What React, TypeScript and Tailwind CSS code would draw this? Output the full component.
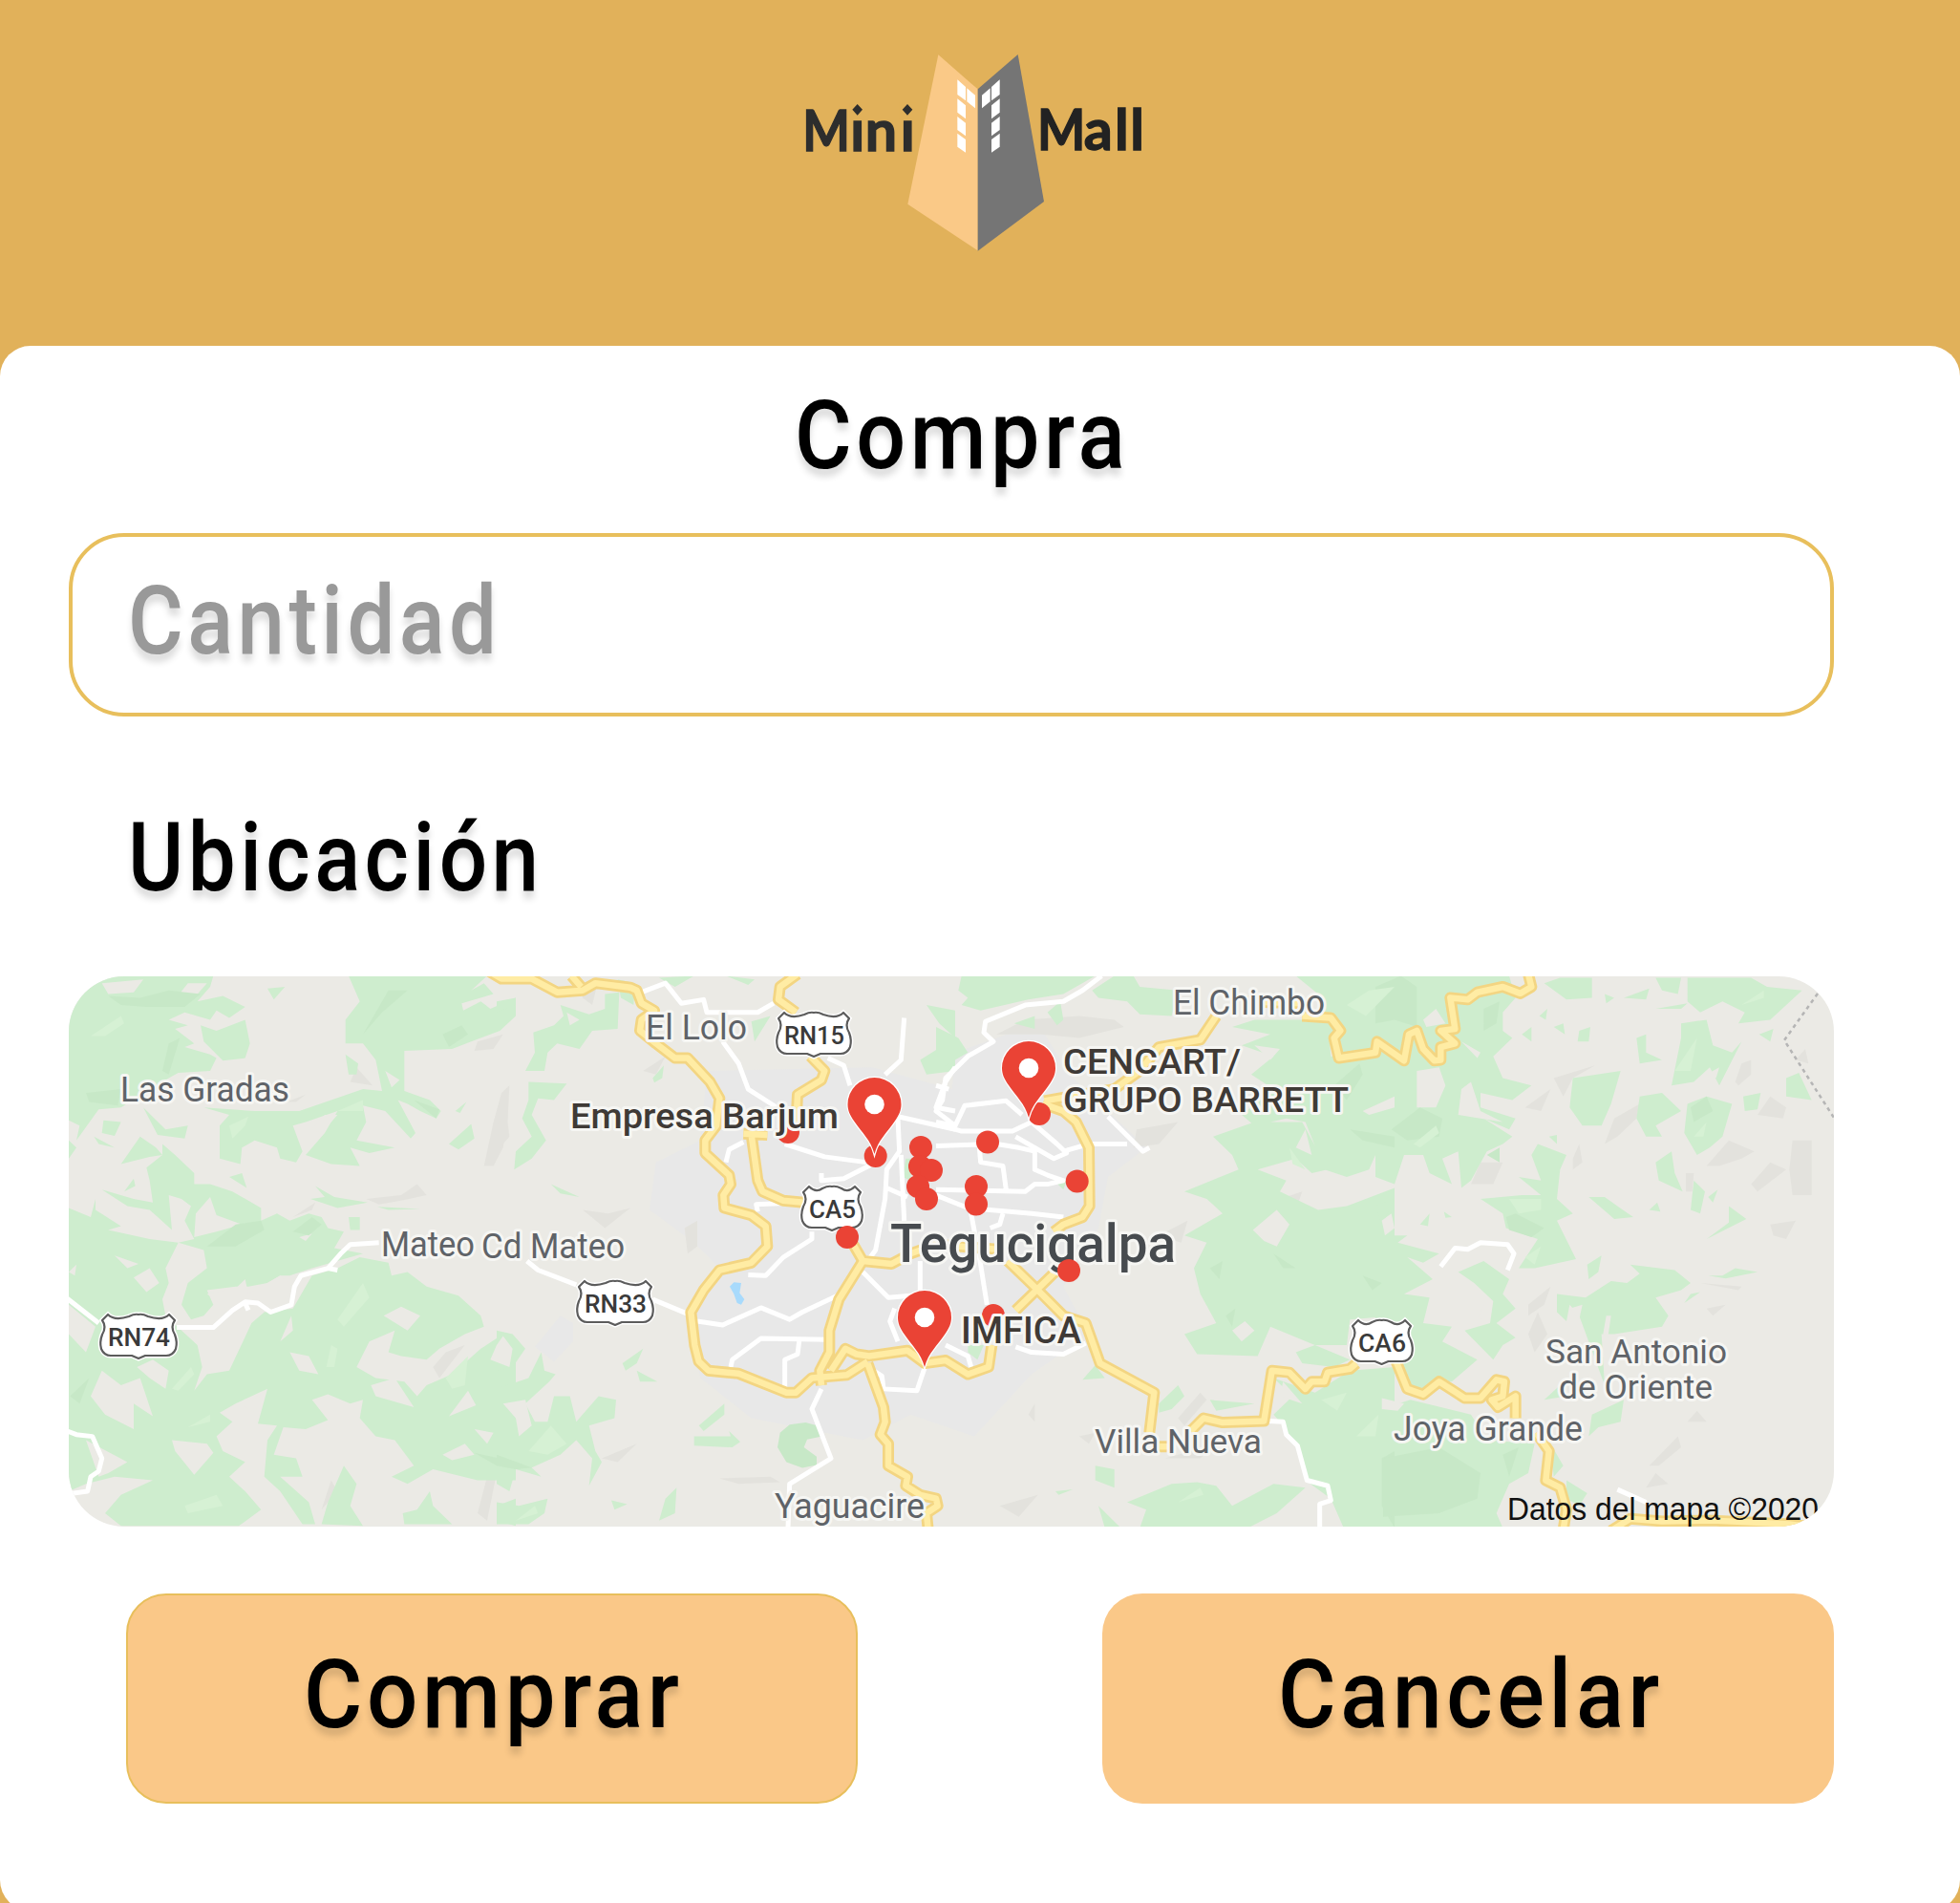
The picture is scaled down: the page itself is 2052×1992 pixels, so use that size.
import React from "react";

type Tile = 0 | 1 | 2 | 3;

const TILE_TRANSFORM: Record<Tile, string> = {
  0: "translate(-12 -12) scale(0.33333 0.38265)",
  1: "translate(448 -12) scale(0.33333 0.38265)",
  2: "translate(908 -12) scale(0.33333 0.38265)",
  3: "translate(1368 -12) scale(0.33333 0.38265)",
};

const FOREST: Record<Tile, string[]> = {
  0: [
    "M36,30 490,30 480,60 440,100 520,85 590,115 540,145 500,125 480,150 400,130 350,150 410,165 370,175 430,215 400,225 480,245 500,255 480,290 380,295 350,310 200,390 130,395 60,480 70,440 36,425Z",
    "M450,165 500,180 590,150 605,215 590,255 520,262 460,210Z",
    "M36,480 60,500 36,530Z",
    "M660,65 715,60 680,95Z",
    "M915,30 1350,30 1300,70 1340,50 1370,80 1270,105 1275,125 1330,100 1360,120 1440,90 1440,140 1390,180 1300,210 1240,230 1090,235 1090,345 1170,370 1205,400 1190,420 1140,400 1100,380 1070,370 1125,460 1110,475 1030,400 960,385 970,430 940,480 1060,500 980,515 920,500 950,550 860,545 780,520 840,460 880,400 780,430 740,440 770,510 750,540 700,530 690,500 620,480 580,500 575,545 510,530 510,440 540,410 460,390 620,400 760,400 860,370 960,340 1020,345 1000,260 960,215 905,215 905,150 950,100Z",
    "M905,245 945,270 940,300 915,300Z",
    "M145,425 200,430 180,468 140,460Z",
    "M115,470 180,500 130,490Z",
    "M270,390 340,450 410,440 400,475 315,465Z",
    "M200,545 260,470 310,500 330,520 290,525Z",
    "M280,555 330,520 330,490 370,520 430,570 430,600 480,600 550,620 640,665 640,700 690,680 730,700 790,680 830,690 850,720 900,730 870,775 960,790 800,830 730,850 700,850 660,870 600,880 560,880 470,890 490,930 460,960 420,970 390,930 410,870 470,830 460,780 380,760 430,750 400,700 420,660 390,640 350,630 360,725 290,670 220,660 140,615 240,640 300,650 290,590Z",
    "M210,620 240,585 245,605Z",
    "M540,580 580,570 595,610Z",
    "M810,605 870,635 975,650 880,665 795,640 840,635Z",
    "M1005,662 1140,668 1040,670Z",
    "M915,690 950,690 950,725 920,725Z",
    "M1230,490 1300,435 1310,475 1260,505Z",
    "M1250,400 1285,375 1265,405Z",
    "M105,690 120,640 120,670 200,715 160,725 290,750 380,760 340,830 350,870 330,915 340,960 440,1040 455,1100 430,1165 470,1120 540,1110 610,980 650,950 740,940 800,850 880,830 950,800 1040,815 1050,850 1100,840 1160,880 1260,905 1330,960 1340,990 1280,1010 1200,1050 1160,1080 1080,1070 1040,1060 1060,1000 980,1030 940,1100 1000,1130 1090,1140 1130,1180 1160,1150 1240,1120 1330,1050 1400,1010 1440,1040 1440,1410 1320,1410 1180,1380 1100,1420 1050,1400 1120,1370 1060,1300 1000,1290 950,1240 960,1190 920,1200 850,1175 800,1190 850,1245 780,1270 710,1265 680,1340 750,1350 770,1400 700,1400 790,1470 810,1530 770,1530 700,1440 650,1400 660,1300 690,1260 630,1255 660,1160 560,1200 510,1225 550,1250 500,1290 520,1330 590,1360 540,1400 590,1440 640,1490 570,1535 200,1535 150,1500 200,1450 300,1410 180,1400 90,1420 36,1440 36,665Z",
    "M830,1530 850,1470 900,1370 940,1420 920,1480 960,1535Z",
    "M1085,1500 1130,1490 1170,1440 1180,1480 1240,1530 1090,1530Z",
    "M1380,1480 1440,1460 1440,1535 1380,1520Z",
  ],
  1: [
    "M200,110 290,135 340,120 340,80 385,75 380,175 300,180 260,230 190,215 160,240 150,290 90,290 120,240 115,185 180,165 210,140Z",
    "M100,320 220,325 180,370 130,365 110,410 155,480 110,530 55,560 60,510 110,470 80,420 100,370Z",
    "M0,100 60,90 60,110 0,130Z",
    "M490,310 525,275 520,310 495,322Z",
    "M380,40 435,50 430,110 390,90Z",
    "M0,1000 50,1010 90,1050 50,1100 0,1110Z",
    "M0,1160 100,1130 140,1060 150,1110 185,1120 165,1140 90,1200 120,1250 160,1250 180,1180 230,1180 250,1250 320,1180 375,1190 370,1240 290,1260 310,1330 330,1360 290,1425 300,1350 250,1300 200,1340 110,1375 140,1400 60,1380 40,1440 0,1420Z",
    "M395,1090 460,1050 440,1090 405,1110Z",
    "M440,1110 505,1140 450,1140Z",
    "M635,1260 715,1200 715,1230 650,1275Z",
    "M620,1290 735,1290 730,1275 765,1305 740,1320 620,1315Z",
    "M0,1470 70,1480 160,1460 150,1500 100,1530 0,1530Z",
    "M510,1520 530,1460 565,1430 560,1500Z",
    "M360,1465 410,1475 370,1490Z",
    "M510,35 620,30 560,60Z",
    "M720,30 810,40 790,55Z",
    "M800,155 860,140 810,210Z",
    "M1350,110 1440,125 1440,290 1350,300 1330,260 1440,200 1390,160Z",
    "M170,600 260,635 200,625Z",
    "M1285,530 1305,530 1300,590 1275,580Z",
  ],
  2: [
    "M80,30 500,30 400,80 290,95 140,125 80,110 100,90 70,70Z",
    "M490,70 560,30 620,30 640,60 760,70 740,140 640,135 600,100 510,90Z",
    "M390,100 400,150 380,165 350,130Z",
    "M245,160 310,140 310,175Z",
    "M0,170 70,200 100,240 20,280 0,280Z",
    "M1130,30 1440,30 1440,250 1390,240 1260,265 1230,200 1150,145 1220,130 1200,80Z",
    "M930,170 1000,150 1230,150 1240,250 1440,250 1440,560 1380,520 1360,560 1290,580 1220,560 1160,430 1100,420 1000,440 960,410 1060,340 990,300 1060,250 960,220 1050,190Z",
    "M870,470 1000,430 1150,430 1230,560 1180,570 1130,530 1010,560 1100,590 1080,620 1200,670 1290,660 1440,610 1440,960 1300,970 1290,1040 1190,1040 1050,990 1010,1070 820,1065 780,1010 880,980 830,900 810,830 850,760 780,740 900,680 850,640 780,620 950,560 930,520Z",
    "M1130,1060 1190,1040 1300,1080 1250,1100 1150,1090Z",
    "M1060,1130 1190,1170 1300,1110 1440,1100 1440,1540 1280,1540 1240,1460 1160,1410 1130,1310 1080,1250 1060,1230 1120,1180Z",
    "M460,1135 500,1095 530,1130Z",
    "M700,1200 760,1150 780,1180 740,1215 700,1225Z",
    "M860,1190 1000,1200 880,1220Z",
    "M600,1470 740,1420 820,1415 880,1425 930,1480 1060,1420 1160,1430 1070,1500 980,1540 640,1540 660,1490Z",
    "M500,1370 560,1380 560,1430 500,1410Z",
    "M375,1440 430,1435 385,1450Z",
    "M510,1480 580,1540 530,1540Z",
    "M100,1040 150,1040 130,1080 100,1060Z",
    "M370,590 410,590 400,615Z",
  ],
  3: [
    "M0,30 420,30 440,90 400,130 400,180 430,200 370,250 400,310 490,330 430,370 330,350 330,390 440,420 420,450 340,420 430,470 400,490 350,510 300,590 270,610 260,510 210,530 240,600 170,570 150,520 90,520 60,600 0,580Z",
    "M0,660 60,640 20,710Z",
    "M0,740 100,740 70,760 200,790 150,815 100,800 180,860 90,900 170,910 150,980 240,990 210,1030 320,1080 240,1140 200,1140 150,1160 100,1150 60,1090 0,1090Z",
    "M0,1220 110,1190 300,1230 350,1300 500,1310 480,1390 420,1420 380,1500 400,1540 0,1540Z",
    "M510,490 600,520 580,560 570,640 620,680 570,700 630,805 500,830 450,830 510,750 410,720 400,680 330,640 460,630 520,630 450,580 520,590 490,520Z",
    "M545,470 570,465 570,490Z",
    "M530,50 580,35 680,35 680,90 600,95Z",
    "M260,840 340,810 420,860 400,900 440,940 380,980 440,1020 400,1040 370,1080 280,1000 360,980 370,920 310,870Z",
    "M570,900 660,910 740,865 790,870 830,845 800,820 940,835 990,870 960,890 880,910 920,960 900,990 750,1010 710,1010 720,1150 640,960 610,930 600,975 570,950Z",
    "M970,925 1020,895 990,900Z",
    "M620,310 770,290 740,380 710,440 650,440 610,390Z",
    "M820,200 850,190 850,240 900,260 830,270Z",
    "M830,360 900,350 960,400 880,440 900,470 850,470 820,420Z",
    "M930,330 960,200 960,160 1040,150 1060,220 1120,240 1150,210 1080,330 1050,280 1000,320Z",
    "M980,380 1040,360 1120,380 1090,470 1050,500 1010,520 970,460Z",
    "M980,35 1180,35 1230,60 1340,70 1240,150 1140,160 1160,130 1090,100 1020,130 980,100Z",
    "M780,90 860,65 850,95Z",
    "M880,35 960,35 950,80 900,70Z",
    "M720,80 750,90 725,105Z",
    "M880,120 980,105 960,120Z",
    "M460,190 490,170 490,210Z",
    "M515,140 540,120 535,150Z",
    "M560,170 590,160 595,190Z",
    "M640,180 675,170 670,210 635,210Z",
    "M1205,190 1250,175 1240,210Z",
    "M1155,360 1210,350 1200,395 1160,400Z",
    "M1290,310 1330,295 1370,370 1290,360Z",
    "M880,540 930,510 940,570 965,620 890,590Z",
    "M670,635 720,635 760,660 810,690 750,695Z",
    "M1000,590 1035,620 1020,680 990,670Z",
    "M860,670 885,650 895,675Z",
    "M1045,635 1075,615 1060,650Z",
    "M1110,660 1165,695 1040,750 1110,705Z",
    "M1045,850 1090,850 1130,830 1200,840 1100,858Z",
    "M670,860 665,820 710,795 700,840Z",
    "M680,1230 780,1190 770,1250 700,1265 670,1290Z",
    "M530,1190 580,1150 600,1180Z",
    "M550,1310 590,1370 560,1400Z",
    "M600,1410 665,1445 640,1480 600,1460Z",
    "M215,675 240,690 220,692Z",
    "M140,710 170,680 165,715Z",
  ],
};

const CLEARINGS: Record<Tile, string[]> = {
  0: [
    "M370,95 410,50 470,50 420,100Z",
    "M140,50 270,40 240,75 160,80Z",
    "M105,1180 140,1110 200,1150 260,1130 300,1235 240,1200 240,1270 150,1230Z",
    "M240,855 290,830 320,870 280,895Z",
    "M180,795 255,818 220,830Z",
    "M36,840 60,820 55,850Z",
    "M36,930 120,990 90,1060 36,1010Z",
    "M360,1300 470,1310 490,1335 430,1395 370,1330Z",
    "M430,745 435,680 480,635 500,685 580,710 500,730Z",
    "M560,885 590,860 600,900 640,880 700,850 740,880 720,910 660,930 550,950 470,900Z",
    "M1025,960 1080,935 1140,960 1100,1000Z",
    "M1230,1235 1290,1165 1315,1205Z",
    "M985,1150 1060,1130 1120,1210 1000,1180Z",
    "M1380,1040 1400,1015 1430,1050 1420,1100 1360,1080Z",
    "M1210,1340 1280,1310 1310,1340 1240,1355Z",
    "M1310,1270 1370,1280 1350,1310Z",
    "M90,1300 220,1360 160,1390 130,1400Z",
    "M760,745 800,735 780,755Z",
    "M800,450 840,410 880,410 830,460Z",
    "M1030,290 1075,315 1050,335Z",
    "M730,1060 790,1070 820,1120 760,1110Z",
    "M700,1030 735,960 740,1000Z",
    "M590,1210 640,1170 620,1225Z",
    "M250,1100 300,1080 350,1110 340,1160 290,1130Z",
  ],
  1: ["M20,1200 90,1190 110,1260 70,1290 60,1240Z", "M220,130 260,150 230,165Z"],
  2: [
    "M995,725 1070,670 1110,710 1070,770 1030,755Z",
    "M930,1000 970,975 1000,1000 960,1030Z",
    "M1160,450 1180,520 1130,500Z",
    "M1340,400 1440,360 1440,390 1360,410Z",
    "M1090,1140 1150,1200 1080,1180Z",
    "M1000,220 1080,230 1050,260Z",
  ],
  3: [
    "M130,290 200,280 220,330 190,390 130,390Z",
    "M150,150 190,120 220,160 160,170Z",
    "M270,340 300,320 330,400 400,430 260,410Z",
    "M270,210 330,240 320,255Z",
    "M20,700 50,680 60,720 30,740Z",
    "M610,940 650,930 640,970Z",
    "M725,960 740,960 730,1020 715,1010Z",
    "M1040,300 1080,280 1070,310Z",
    "M340,930 360,960 320,970Z",
    "M20,1185 90,1200 70,1220 20,1215Z",
  ],
};

const DARK_FOREST: Record<Tile, string[]> = {
  0: [
    "M160,85 260,90 350,70 450,80 400,115 280,115 200,110Z",
    "M350,215 385,200 350,300 330,290Z",
    "M90,350 200,340 190,385 100,375Z",
    "M960,190 1040,70 1100,70 1020,130Z",
    "M1210,190 1270,165 1290,190 1230,225Z",
    "M470,770 560,710 640,700 650,725 560,770Z",
    "M740,730 800,690 830,710 790,740Z",
    "M40,1180 100,1130 70,1200Z",
    "M1310,1335 1440,1360 1380,1370Z",
    "M1120,370 1200,395 1190,420Z",
  ],
  1: [
    "M0,1340 110,1375 60,1380 0,1370Z",
    "M890,1280 920,1258 970,1252 1015,1262 1022,1290 975,1298 965,1320 1005,1345 1005,1368 960,1376 910,1360 882,1320Z",
  ],
  2: [
    "M1250,330 1330,270 1340,300 1290,370Z",
    "M1300,450 1440,470 1440,500 1340,480Z",
    "M860,830 900,810 890,860Z",
    "M910,960 940,940 930,990Z",
    "M1400,1350 1440,1330 1440,1540 1400,1480Z",
    "M1060,790 1130,830 1090,830Z",
    "M1340,850 1400,870 1370,890Z",
  ],
  3: [
    "M0,60 80,30 130,60 130,170 60,150 0,160Z",
    "M50,450 140,390 210,420 200,470 100,480Z",
    "M410,690 440,680 530,720 490,745 420,725Z",
    "M24,1350 200,1320 330,1390 320,1460 200,1500 24,1510Z",
    "M340,120 390,100 380,160 340,180Z",
    "M990,390 1040,360 1060,400 1000,430Z",
    "M400,1340 450,1320 420,1400Z",
    "M350,520 390,500 390,540Z",
  ],
};

const LIGHT_FOREST: Record<Tile, string[]> = {
  0: [
    "M105,195 200,140 210,160 150,195Z",
    "M540,440 600,415 590,440 550,475Z",
    "M880,400 960,370 960,400Z",
    "M880,970 960,870 980,910 900,990Z",
    "M360,1160 420,1100 430,1120 380,1165Z",
    "M1220,1130 1290,1070 1280,1150 1240,1160Z",
    "M400,1480 500,1450 520,1480 410,1500Z",
    "M845,1100 860,1040 880,1050 870,1100Z",
    "M410,1265 480,1230 480,1250Z",
  ],
  1: ["M100,1330 170,1260 220,1310 160,1340Z", "M60,1520 120,1480 130,1500Z"],
  2: [
    "M1290,110 1360,70 1440,60 1350,140Z",
    "M1110,500 1160,560 1120,545Z",
    "M1320,1290 1390,1230 1380,1290Z",
    "M1210,1190 1290,1170 1260,1220Z",
    "M760,1470 830,1430 840,1450Z",
  ],
  3: [
    "M120,490 190,440 200,460 140,500Z",
    "M940,290 1010,200 990,290Z",
    "M470,800 520,770 500,820Z",
    "M1150,110 1220,70 1220,90Z",
    "M420,640 520,640 520,670 450,680Z",
    "M1000,470 1040,430 1030,470Z",
  ],
};

const RELIEF: Record<Tile, string[]> = {
  0: [
    "M1370,430 1395,350 1420,330 1415,420 1400,500 1370,550 1340,550Z",
    "M970,640 1080,630 1130,600 1160,630 1080,645 1010,655Z",
    "M1320,210 1400,190 1370,230 1310,235Z",
    "M290,1120 350,1100 350,1155Z",
    "M740,690 810,650 800,670Z",
    "M940,280 990,330 920,320Z",
    "M720,375 780,355 750,375Z",
    "M1180,1100 1220,1060 1280,1040 1200,1130Z",
    "M860,1410 880,1440 830,1490Z",
    "M1320,1500 1350,1400 1380,1390 1350,1520Z",
  ],
  1: [
    "M0,440 30,400 40,470 10,500Z",
    "M260,50 320,40 300,110 270,90Z",
    "M270,670 350,680 420,665 340,720Z",
    "M70,1250 110,1230 100,1290 70,1290Z",
    "M460,290 530,250 500,300Z",
    "M700,1405 860,1400 890,1415 760,1420Z",
    "M590,720 630,700 630,770 600,790Z",
    "M330,1350 440,1310 380,1360Z",
  ],
  2: [
    "M190,190 280,150 450,140 560,150 590,170 450,200 330,190Z",
    "M630,450 760,430 700,490 620,500Z",
    "M760,1240 830,1170 850,1190 780,1260Z",
    "M700,740 790,700 770,760Z",
    "M720,1350 880,1310 830,1350Z",
    "M200,1480 320,1450 260,1510Z",
    "M290,1230 310,1200 310,1250Z",
    "M1080,640 1150,620 1130,670Z",
    "M450,1290 500,1280 480,1310Z",
  ],
  3: [
    "M720,490 750,420 830,380 820,420 760,470Z",
    "M470,390 550,340 520,400Z",
    "M560,310 690,275 620,310 590,360Z",
    "M300,600 330,540 400,540 370,600Z",
    "M1130,320 1150,270 1180,260 1180,300 1140,330Z",
    "M1040,550 1110,480 1190,510 1150,530 1080,550Z",
    "M1300,560 1310,480 1370,480 1370,630 1310,630Z",
    "M1180,600 1240,540 1290,560 1200,620Z",
    "M1240,710 1320,700 1290,750 1250,740Z",
    "M480,930 550,880 530,930 480,960Z",
    "M1040,940 1100,930 1060,960Z",
    "M1020,870 1150,880 1140,890Z",
    "M850,1430 880,1390 920,1420Z",
    "M980,1250 1010,1220 1040,1250Z",
    "M1200,410 1240,360 1290,390 1280,420Z",
    "M860,1370 950,1290 960,1320 890,1370Z",
    "M620,530 640,490 650,540 620,560Z",
    "M1320,260 1350,230 1360,270Z",
    "M975,570 1000,570 995,620 975,620Z",
    "M540,1010 500,1060 480,1010 510,950Z",
  ],
};

const HIGHWAYS: Record<Tile, string> = {
  0: "",
  1: "M-35,12 L15,38 110,38 190,75 270,70 310,50 420,62 440,70 455,105 495,125 455,150 450,180 500,215 560,255 600,255 670,320 700,365 690,440 655,480 655,515 730,575 735,600 712,630 715,665 800,685 845,715 850,770 800,815 700,835 650,890 610,950 622,1040 635,1085 665,1110 760,1118 910,1170 940,1170 990,1130 1100,1122 1165,1085 M235,30 L265,60 M945,25 L890,60 885,95 940,130 M985,250 L1030,290 1020,315 945,355 940,440 M775,462 L850,465 M800,465 L820,590 835,620 900,645 965,650 M1120,765 L1150,810 1240,818 1300,790 1380,765 1600,780 M1150,810 L1075,915 1045,1000 1045,1060 1015,1110 1020,1150 M1050,1110 L1095,1050 1130,1065 1170,1070 1290,1055 1345,1090 1410,1082 1480,1120 1545,1100 1555,1040 M1165,1090 L1215,1210 1220,1250 1205,1285 1230,1310 1230,1370 1290,1400 1285,1425 1330,1450 1380,1460 1385,1480 1350,1500 1355,1545",
  2: "M335,380 L400,400 440,430 480,500 482,660 460,690 400,710 370,730 M340,372 L420,360 560,340 640,290 700,225 830,205 880,140 M960,100 L1150,105 M1150,140 L1240,145 1270,180 1250,200 1265,255 1380,240 1385,210 1470,262 1485,190 1510,180 1530,230 1565,262 1585,260 1585,225 1630,215 1585,180 1630,175 1615,90 1670,95 1700,75 1780,60 1835,78 1870,60 1860,25 M250,945 L380,835 M225,810 L320,890 400,960 470,980 515,1090 685,1170 670,1280 M700,1318 L730,1318 M800,1275 L840,1240 900,1252 1030,1248 1055,1110 1110,1115 1160,1160 1180,1140 1220,1140 1230,1115 1300,1105 1320,1090",
  3: "M65,1085 L100,1160 150,1175 200,1140 280,1185 330,1185 380,1135 405,1140 400,1180 365,1190 385,1210 440,1180 440,1240 M505,1280 L545,1330 535,1410 580,1430 600,1490 590,1545 M740,1548 L800,1515 900,1522 1060,1520 1300,1530 1440,1545",
};

const STREETS: Record<Tile, string> = {
  0: "M30,912 L130,980 M375,992 L490,992 550,945 590,922 630,925 670,950 735,930 745,880 765,850 850,830 880,835 M850,830 L890,790 920,765 1010,760 M30,1275 L60,1285 110,1290 140,1350 130,1385 105,1400 95,1440 30,1448 M590,925 L600,945",
  1: "M455,75 L530,50 580,105 650,95 660,130 820,130 870,105 M710,210 L760,270 790,340 880,390 M1040,255 L1090,275 1110,330 M1280,145 L1270,260 1220,300 M905,490 L1030,525 1160,540 M1180,545 L1090,585 1020,590 1020,570 M1260,415 L1440,450 M1260,420 L1265,510 1225,560 1220,640 1190,780 1165,810 M1270,520 L1280,700 M1225,610 L1290,635 M720,540 L730,505 775,485 M955,650 L815,655 820,675 M990,730 L990,750 900,800 845,850 790,848 M630,975 L710,985 830,938 920,970 960,950 1070,905 M1150,840 L1230,910 1300,905 M1250,940 L1235,975 1260,1030 M735,1100 L740,1080 830,1022 1040,1025 M950,1030 L945,1065 905,1080 905,1160 M1020,1160 L990,1215 1050,1350 920,1420 915,1540 M95,810 L130,835 250,875 M490,915 L600,955 M1165,1100 L1210,1125 1215,1160 1320,1165 1345,1100 M1330,810 L1330,890 M1440,280 L1410,320 1380,390 1440,400",
  2: "M520,30 L460,70 400,100 280,110 155,155 150,185 180,210 100,250 30,310 20,370 0,400 60,440 0,430 M0,330 L40,340 M60,440 L90,385 220,372 270,410 M0,435 L80,455 240,455 300,430 380,490 410,515 370,530 250,470 M0,495 L190,490 M190,490 L260,500 310,510 310,560 350,575 400,590 350,600 310,600 280,620 0,615 M400,510 L480,490 600,490 M540,415 L650,510 670,500 M135,490 L140,540 210,550 220,615 M0,630 L100,665 300,680 400,690 M110,680 L140,820 160,930 M210,680 L200,710 170,720 M30,1040 L100,1070 110,1100 M250,1045 L300,1060 400,1065 470,1035 M1045,1248 L1090,1250 1100,1285 1135,1315 1165,1410 1230,1425 1240,1465 1205,1475 1205,1540",
  3: "M205,825 L250,775 290,778 330,760 415,765 435,790 415,835 M760,1435 L850,1470",
};

const TILES: Tile[] = [0, 1, 2, 3];

interface Label {
  text: string;
  x: number;
  y: number;
  w: number;
  size: number;
  weight?: number;
  fill: string;
}

const TOWN = "#5f6368";
const PLACE = "#3f3a36";

const LABELS: Label[] = [
  { text: "Las Gradas", x: 54, y: 131, w: 177, size: 36, fill: TOWN },
  { text: "Mateo", x: 327, y: 293, w: 98, size: 36, fill: TOWN },
  { text: "Cd Mateo", x: 432, y: 295, w: 150, size: 36, fill: TOWN },
  { text: "El Lolo", x: 604, y: 66, w: 106, size: 36, fill: TOWN },
  { text: "Empresa Barjum", x: 525, y: 159, w: 281, size: 36, weight: 500, fill: PLACE },
  { text: "El Chimbo", x: 1156, y: 40, w: 159, size: 36, fill: TOWN },
  { text: "CENCART/", x: 1041, y: 102, w: 186, size: 37, weight: 500, fill: PLACE },
  { text: "GRUPO BARRETT", x: 1041, y: 142, w: 299, size: 37, weight: 500, fill: PLACE },
  { text: "Tegucigalpa", x: 860, y: 299, w: 299, size: 55, weight: 500, fill: "#474b4f" },
  { text: "IMFICA", x: 934, y: 384, w: 126, size: 38, weight: 500, fill: PLACE },
  { text: "Villa Nueva", x: 1074, y: 499, w: 175, size: 35, fill: TOWN },
  { text: "Yaguacire", x: 739, y: 567, w: 157, size: 36, fill: TOWN },
  { text: "San Antonio", x: 1546, y: 405, w: 190, size: 35, fill: TOWN },
  { text: "de Oriente", x: 1560, y: 441.5, w: 161, size: 35, fill: TOWN },
  { text: "Joya Grande", x: 1387, y: 486, w: 198, size: 36, fill: TOWN },
];

const SHIELDS = [
  { text: "RN15", x: 740, y: 37, w: 80 },
  { text: "CA5", x: 766, y: 219, w: 66 },
  { text: "RN33", x: 531, y: 318, w: 82 },
  { text: "RN74", x: 32, y: 353, w: 82 },
  { text: "CA6", x: 1341, y: 359, w: 67 },
];

const DOTS: [number, number][] = [
  [844.7, 188], [753, 163], [815, 273], [892, 179], [891, 199], [903, 203], [889, 220], [898, 233],
  [962, 173.6], [950, 220], [950, 238.6], [1055.7, 214.5], [968, 355], [1016, 144],
];

const PINS: [number, number][] = [[843.5, 186], [896, 409], [1005, 148]];

function Shield({ x, y, w, text }: { x: number; y: number; w: number; text: string }) {
  const m = w / 2;
  const d = `M3,7 L9,1 Q16,8 ${m - 10},3 Q${m - 4},0 ${m},1 Q${m + 4},0 ${m + 10},3 Q${w - 16},8 ${w - 9},1 L${w - 3},7 Q${w - 8},14 ${w - 3},22 Q${w},30 ${w - 2},37 Q${w - 5},44 ${w - 12},44 L${m + 7},44 L${m},47 L${m - 7},44 L12,44 Q5,44 2,37 Q0,30 3,22 Q8,14 3,7Z`;
  return (
    <g transform={`translate(${x} ${y})`}>
      <path d={d} fill="#fff" stroke="#fff" strokeWidth="5" />
      <path d={d} fill="#fff" stroke="#5c5c5c" strokeWidth="2.2" strokeLinejoin="round" />
      <text x={9} y={34} textLength={w - 17} lengthAdjust="spacingAndGlyphs" fontSize="26" fontWeight="500" fill="#3a3a3a">
        {text}
      </text>
    </g>
  );
}

function Layer({ shapes, fill }: { shapes: Record<Tile, string[]>; fill: string }) {
  return (
    <g fill={fill}>
      {TILES.map((t) => (
        <path key={t} transform={TILE_TRANSFORM[t]} d={shapes[t].join(" ")} />
      ))}
    </g>
  );
}

function Roads({ lines, color, width }: { lines: Record<Tile, string>; color: string; width: number }) {
  return (
    <g fill="none" stroke={color} strokeWidth={width} strokeLinejoin="round">
      {TILES.map((t) => (
        <path key={t} transform={TILE_TRANSFORM[t]} d={lines[t]} vectorEffect="non-scaling-stroke" />
      ))}
    </g>
  );
}

function CityMap() {
  return (
    <svg viewBox="0 0 1848 576" className="block h-[576px] w-[1848px] font-['Roboto',sans-serif]">
      <rect width="1848" height="576" fill="#ebeae5" />
      <path
        transform={TILE_TRANSFORM[1]}
        fill="#e8e8e8"
        d="M660,290 1180,280 1430,340 1440,240 1700,160 1800,300 2040,500 1920,580 1890,720 1780,880 1860,1010 1680,1120 1500,1290 1300,1230 1150,1300 800,1240 640,1130 600,960 700,830 620,760 480,670 500,540 640,480Z M120,1045 200,960 240,980 240,1030 180,1085Z"
      />
      <Layer shapes={RELIEF} fill="#e3e2dd" />
      <Layer shapes={FOREST} fill="#ceedce" />
      <Layer shapes={CLEARINGS} fill="#ebeae5" />
      <Layer shapes={DARK_FOREST} fill="#c7e8c7" />
      <Layer shapes={LIGHT_FOREST} fill="#d6f1d4" />
      <path transform={TILE_TRANSFORM[1]} fill="#a8dafc" d="M732,880 745,868 768,870 763,898 778,915 768,930 755,925 745,900Z" />
      <Roads lines={STREETS} color="#ffffff" width={5} />
      <Roads lines={HIGHWAYS} color="#f3d582" width={12} />
      <Roads lines={HIGHWAYS} color="#ffeca4" width={6.5} />
      <path d="M1831,18 L1796,67 L1848,148" fill="none" stroke="#b5b5b5" strokeWidth="2.5" strokeDasharray="4 4" />
      {SHIELDS.map((s) => (
        <Shield key={s.text} {...s} />
      ))}
      {DOTS.map(([x, y]) => (
        <circle key={`${x}-${y}`} cx={x} cy={y} r="12" fill="#ea4335" />
      ))}
      {LABELS.map((l) => (
        <text
          key={l.text}
          x={l.x}
          y={l.y}
          textLength={l.w}
          lengthAdjust="spacingAndGlyphs"
          fontSize={l.size}
          fontWeight={l.weight ?? 400}
          fill={l.fill}
          stroke="#f6f6f3"
          strokeWidth="6"
          strokeLinejoin="round"
          paintOrder="stroke"
        >
          {l.text}
        </text>
      ))}
      <circle cx="1047" cy="308" r="12" fill="#ea4335" />
      {PINS.map(([x, y]) => (
        <g key={x} transform={`translate(${x} ${y})`}>
          <path
            d="M0,0 C-4,-15 -13,-22 -21,-34 C-26,-41 -28,-46 -28,-52 A28,28 0 0 1 28,-52 C28,-46 26,-41 21,-34 C13,-22 4,-15 0,0Z"
            fill="#ea4335"
            stroke="#fff"
            strokeWidth="2.5"
            paintOrder="stroke"
          />
          <circle cy="-52" r="10.3" fill="#fff" />
        </g>
      ))}
      <text
        x="1506"
        y="569"
        textLength="326"
        lengthAdjust="spacingAndGlyphs"
        fontSize="34"
        fill="#111"
        className="font-['Liberation_Sans',sans-serif]"
      >
        Datos del mapa ©2020
      </text>
    </svg>
  );
}

const WINDOWS = [
  [547, 160, 573, 183, 573, 226, 547, 207],
  [577, 187, 603, 209, 603, 250, 577, 229],
  [547, 220, 573, 241, 573, 283, 547, 263],
  [547, 276, 573, 296, 573, 337, 547, 318],
  [547, 329, 573, 348, 573, 389, 547, 371],
];

function Logo() {
  const left = WINDOWS.map((p) => p.join(" "));
  const right = WINDOWS.map((p) => p.map((v, i) => (i % 2 === 0 ? 1227 - v : v)).join(" "));
  return (
    <svg viewBox="0 0 1200 750" className="h-[250px] w-[400px] font-['Lato',sans-serif] font-bold">
      <polygon points="487,82 611,190 611,697 391,551" fill="#fac987" />
      <polygon points="737,81 819,543 611,698 611,190" fill="#757575" />
      {[...left, ...right].map((p) => (
        <polygon key={p} points={p} fill="#fff" />
      ))}
      <g fontSize="177" strokeWidth="4">
        <text y="385" fill="#2d2d2d" stroke="#2d2d2d" x="61 211 257 368">
          <tspan textLength="149" lengthAdjust="spacingAndGlyphs">M</tspan>
          ini
        </text>
        <path d="M208,232 H258 V284 H208Z M365,232 H415 V284 H365Z" fill="#e1b15a" />
        <path d="M233,237 L249,254 L233,272 L217,254Z M390,237 L406,254 L390,272 L374,254Z" fill="#2d2d2d" />
        <text y="382" fill="#222222" stroke="#222222" x="798 944 1041 1090">
          <tspan textLength="151" lengthAdjust="spacingAndGlyphs">M</tspan>
          all
        </text>
      </g>
    </svg>
  );
}

const DIN =
  "inline-block origin-left whitespace-nowrap font-['Roboto',sans-serif] text-[100px] leading-[120px] font-medium tracking-[5px] [text-shadow:0_8px_8px_rgba(0,0,0,0.14)]";

export default function App() {
  return (
    <div className="h-[1992px] w-[2052px] overflow-hidden bg-[#e1b15a]">
      <header className="flex h-[362px] pt-[30px] pl-[820px]">
        <Logo />
      </header>
      <main className="flex h-[1638px] flex-col rounded-[32px] bg-white pr-[132px] pl-[72px]">
        <h1 className="mt-[34px] h-[120px] shrink-0 pl-[760px]">
          <span className={`${DIN} scale-x-[0.915] text-black`}>Compra</span>
        </h1>
        <div className="mt-[42px] flex h-[192px] shrink-0 items-start rounded-[58px] border-4 border-[#e8bf5c] pt-[28px] pl-[58px]">
          <span className={`${DIN} scale-x-[0.887] text-[#999]`}>Cantidad</span>
        </div>
        <h2 className="mt-[88px] h-[120px] shrink-0 pl-[62px]">
          <span className={`${DIN} scale-x-[0.89] text-black`}>Ubicación</span>
        </h2>
        <div className="mt-[64px] h-[576px] shrink-0 overflow-hidden rounded-[58px]">
          <CityMap />
        </div>
        <div className="mt-[70px] flex shrink-0 justify-between pl-[60px]">
          <button className="flex h-[220px] w-[766px] items-start rounded-[42px] border-2 border-[#e8bf5c] bg-[#fac888] pt-[44px] pl-[184px]">
            <span className={`${DIN} scale-x-[0.94] text-black`}>Comprar</span>
          </button>
          <button className="flex h-[220px] w-[766px] items-start rounded-[42px] bg-[#fac888] pt-[46px] pl-[184px]">
            <span className={`${DIN} scale-x-[0.928] text-black`}>Cancelar</span>
          </button>
        </div>
      </main>
    </div>
  );
}
